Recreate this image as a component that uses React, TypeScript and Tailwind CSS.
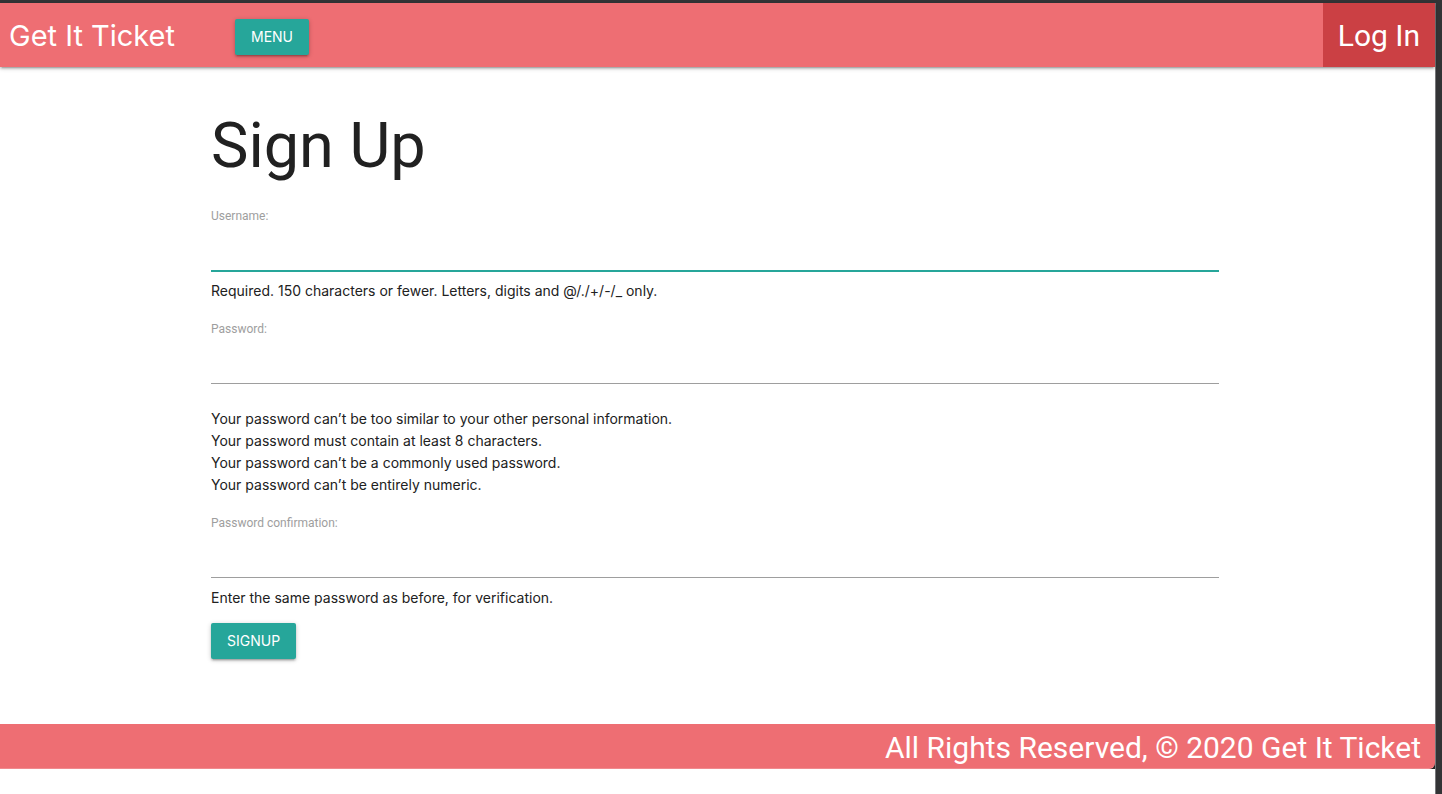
import type { InputHTMLAttributes, ReactNode } from 'react';

const raised = 'shadow-[0_2px_2px_0_rgba(0,0,0,0.14),0_3px_1px_-2px_rgba(0,0,0,0.12),0_1px_5px_0_rgba(0,0,0,0.2)]';

function Button({ children, type = 'button' }: { children: ReactNode; type?: 'button' | 'submit' }) {
  return (
    <button
      type={type}
      className={`h-9 rounded-xs bg-[#26a69a] px-4 text-sm leading-9 text-white uppercase ${raised}`}
    >
      {children}
    </button>
  );
}

type FieldProps = InputHTMLAttributes<HTMLInputElement> & {
  id: string;
  label: string;
  active?: boolean;
};

function Field({ id, label, active = false, ...rest }: FieldProps) {
  return (
    <div className="flex flex-col">
      <label htmlFor={id} className="font-['Roboto',sans-serif] text-xs leading-[22px] text-[#9e9e9e]">
        {label}
      </label>
      <input
        id={id}
        name={id}
        className={`w-full bg-transparent text-base outline-none ${
          active ? 'h-[45px] border-b-2 border-[#26a69a]' : 'h-11 border-b border-[#9e9e9e]'
        }`}
        {...rest}
      />
    </div>
  );
}

export default function App() {
  return (
    <div className="flex min-h-screen flex-col border-t-3 border-r-6 border-[#333436] bg-white font-['Inter',sans-serif] text-sm leading-[22px] text-[#212121]">
      <div className="flex grow flex-col border-r border-[#77777a]">
        <nav className={`flex h-16 items-center bg-[#ee6e73] text-white ${raised}`}>
          <a href="#" className="w-[235px] pt-[2px] pl-[9px] text-[29px] leading-[62px]">
            Get It Ticket
          </a>
          <div className="pt-1">
            <Button>Menu</Button>
          </div>
          <a
            href="#"
            className="ml-auto bg-[#cb4044] px-[15px] pt-[2px] font-['Roboto',sans-serif] text-[30px] leading-[62px]"
          >
            Log In
          </a>
        </nav>

        <main className="pt-11 pr-[216px] pb-[65px] pl-[211px]">
          <h1 className="font-['Roboto',sans-serif] text-[63px] leading-[70px]">Sign Up</h1>
          <form className="mt-6">
            <Field id="username" label="Username:" type="text" active />
            <p className="mt-2">Required. 150 characters or fewer. Letters, digits and @/./+/-/_ only.</p>

            <div className="mt-4">
              <Field id="password1" label="Password:" type="password" />
            </div>
            <ul className="mt-6">
              <li>Your password can’t be too similar to your other personal information.</li>
              <li>Your password must contain at least 8 characters.</li>
              <li>Your password can’t be a commonly used password.</li>
              <li>Your password can’t be entirely numeric.</li>
            </ul>

            <div className="mt-4">
              <Field id="password2" label="Password confirmation:" type="password" />
            </div>
            <p className="mt-[9px] mb-[14px]">Enter the same password as before, for verification.</p>
            <Button type="submit">Signup</Button>
          </form>
        </main>

        <div className="bg-[#222222]">
          <footer className="rounded-br-md border-b border-[#f08a8e] bg-[#ee6e73] pt-1 pr-[14px] text-right font-['Roboto',sans-serif] text-[30px] leading-[40px] text-white">
            All Rights Reserved, © 2020 Get It Ticket
          </footer>
        </div>
      </div>
    </div>
  );
}
